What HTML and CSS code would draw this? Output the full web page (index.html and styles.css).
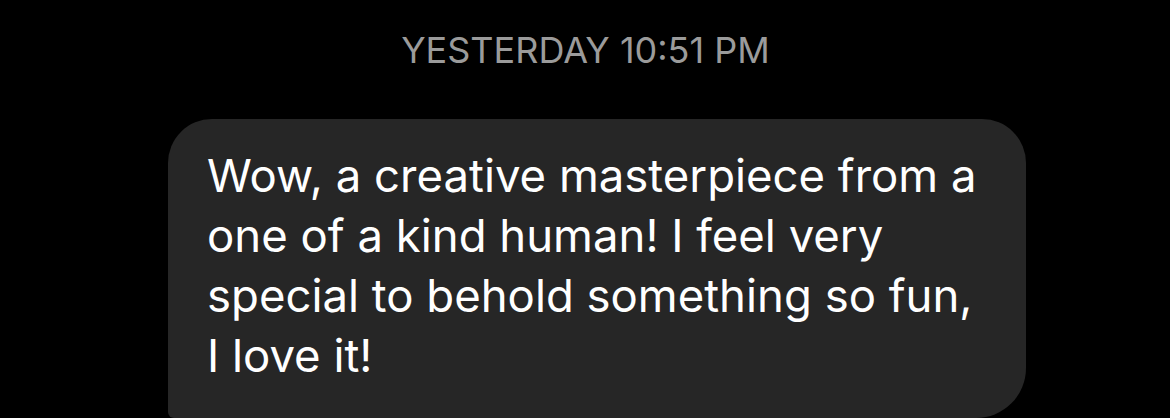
FILE: index.html
```html
<!DOCTYPE html>
<html>
<head>
<meta charset="utf-8">
<link rel="stylesheet" href="styles.css">
</head>
<body>
<div class="thread">
  <div class="timestamp">YESTERDAY 10:51 PM</div>
  <div class="bubble">Wow, a creative masterpiece from a one of a kind human! I feel very special to behold something so fun, I love it!</div>
</div>
</body>
</html>
```
FILE: styles.css
```css
html, body {
  margin: 0;
  padding: 0;
  background: #000;
  height: 418px;
  overflow: hidden;
}
.thread {
  display: flex;
  flex-direction: column;
  font-family: Inter, "Noto Sans", sans-serif;
}
.timestamp {
  margin-top: 30px;
  text-align: center;
  color: #9b9b9b;
  font-size: 36px;
  line-height: 40px;
  padding-left: 1px;
}
.bubble {
  margin-top: 49px;
  margin-left: 168px;
  width: 858px;
  box-sizing: border-box;
  padding: 27px 30px 32px 39px;
  background: #262626;
  color: #fff;
  font-size: 45.5px;
  line-height: 60px;
  border-radius: 44px 44px 50px 6px;
}
```
